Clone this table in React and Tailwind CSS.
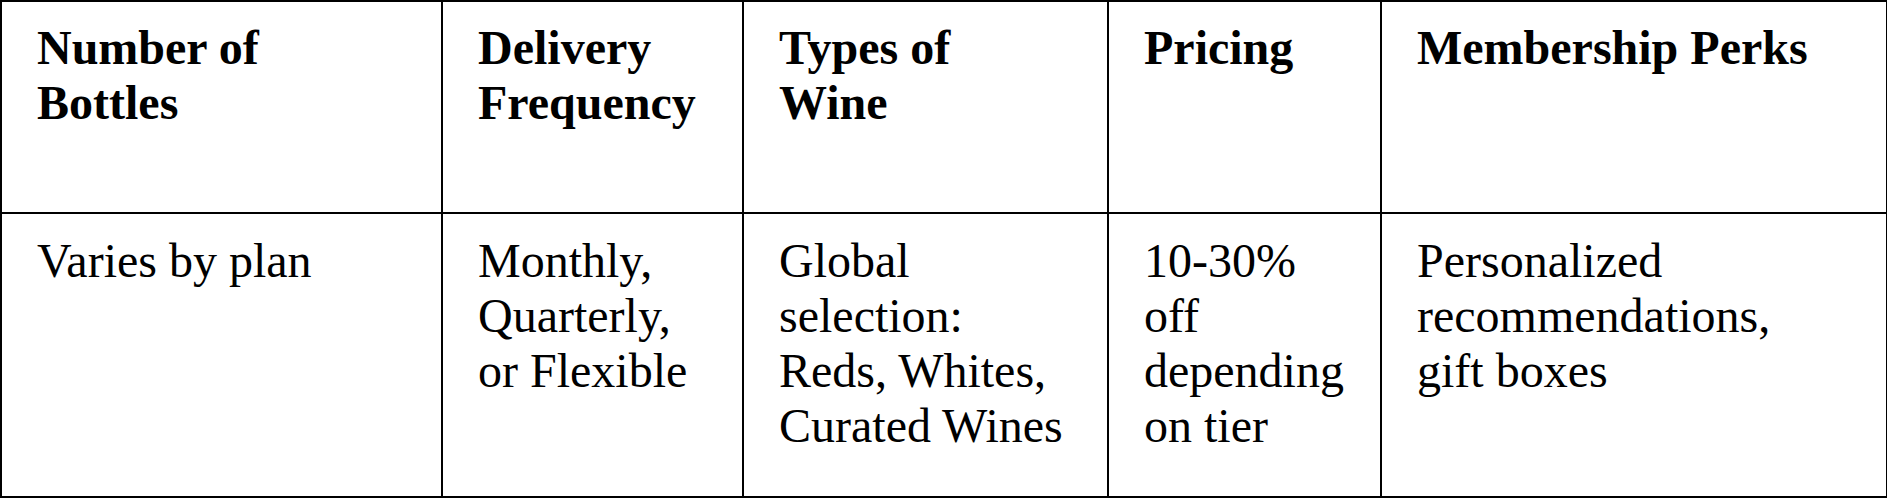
const headers = [
  "Number of Bottles",
  "Delivery Frequency",
  "Types of Wine",
  "Pricing",
  "Membership Perks",
];

const row = [
  "Varies by plan",
  "Monthly, Quarterly, or Flexible",
  "Global selection: Reds, Whites, Curated Wines",
  "10-30% off depending on tier",
  "Personalized recommendations, gift boxes",
];

const widths = ["w-[441px]", "w-[301px]", "w-[365px]", "w-[273px]", "w-[506px]"];

export default function App() {
  return (
    <div className="bg-white font-serif text-black">
      <table className="table-fixed border-collapse w-[1886px] text-[48px] leading-[55px] font-[Liberation_Serif,Times_New_Roman,serif]">
        <colgroup>
          {widths.map((w, i) => (
            <col key={i} className={w} />
          ))}
        </colgroup>
        <thead>
          <tr className="h-[212px]">
            {headers.map((h) => (
              <th
                key={h}
                className="border-2 border-black align-top text-left font-bold pl-[35px] pr-[40px] pt-[18px]"
              >
                {h}
              </th>
            ))}
          </tr>
        </thead>
        <tbody>
          <tr className="h-[284px]">
            {row.map((c) => (
              <td
                key={c}
                className="border-2 border-black align-top pl-[35px] pr-[40px] pt-[19px]"
              >
                {c}
              </td>
            ))}
          </tr>
        </tbody>
      </table>
    </div>
  );
}
